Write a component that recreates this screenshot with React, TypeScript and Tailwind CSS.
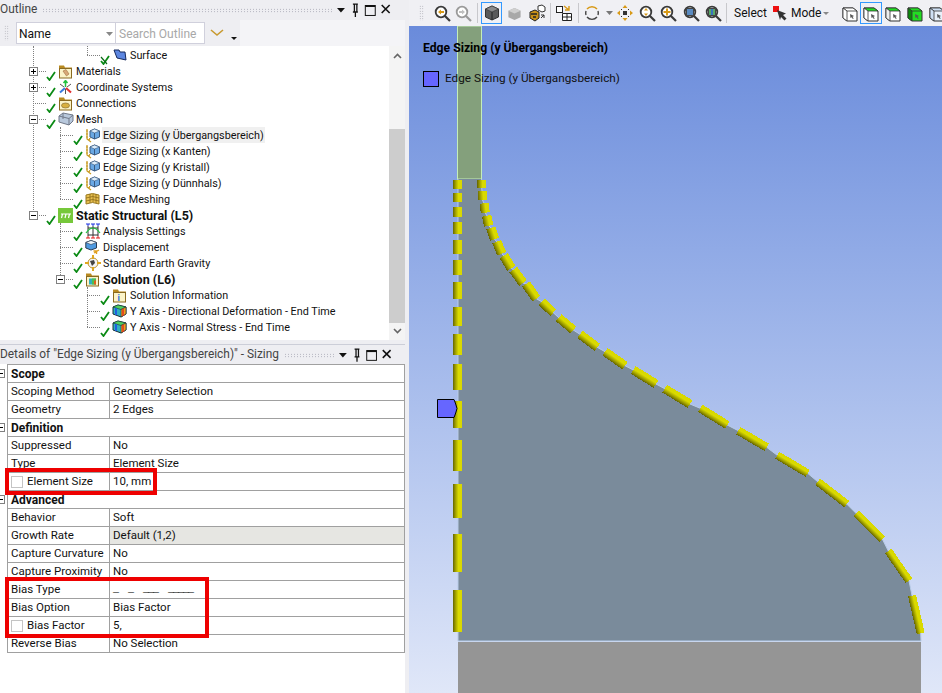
import type { ReactNode } from 'react';

function Check({ crossed }: { crossed?: boolean }) {
  return (
    <svg width="10" height="10" viewBox="0 0 10 10" className="shrink-0 mt-[9px]">
      <path d="M1 6 L3.5 9 L9 1" fill="none" stroke="#0a8a14" strokeWidth="1.8" />
      {crossed && <path d="M1 2 L7 9" stroke="#0a6a14" strokeWidth="1.2" />}
    </svg>
  );
}

function FolderIcon({ inner }: { inner?: ReactNode }) {
  return (
    <svg width="15" height="15" viewBox="0 0 15 15" className="shrink-0">
      <path d="M1 1.5h5l1 2h7v2H1z" fill="#b88a20" />
      <rect x="1.5" y="4.5" width="12" height="9.5" fill="#fbf3c8" stroke="#8a6a20" />
      {inner}
    </svg>
  );
}

function SurfaceIcon() {
  return (
    <svg width="14" height="14" viewBox="0 0 14 14" className="shrink-0">
      <path d="M1 2 L6 2 L7 4 L12 4 L13 12 L4 10 Z" fill="#5c86e0" stroke="#14285c" strokeWidth="1" />
    </svg>
  );
}

function CoordIcon() {
  return (
    <svg width="15" height="15" viewBox="0 0 15 15" className="shrink-0">
      <path d="M7.5 7V1M5.5 3L7.5 .5 9.5 3" stroke="#22c040" fill="none" strokeWidth="1.5" />
      <path d="M7 8L2 12.5" stroke="#3a7ae0" strokeWidth="2" />
      <path d="M8 8L13 12.5" stroke="#e03030" strokeWidth="2" />
      <path d="M2 4L6 7M13 4L9 7M7.5 9V14" stroke="#555" strokeWidth="1" />
    </svg>
  );
}

function MeshIcon() {
  return (
    <svg width="16" height="14" viewBox="0 0 16 14" className="shrink-0">
      <path d="M1 4 L5 1 L15 3 L15 9 L11 13 L1 10 Z" fill="#b8c8dc" stroke="#707888" />
      <path d="M1 4 L11 6.5 L15 3 M11 6.5 V13 M5 1 V7" fill="none" stroke="#707888" />
    </svg>
  );
}

function SizingIcon() {
  return (
    <svg width="15" height="15" viewBox="0 0 15 15" className="shrink-0">
      <path d="M2 1 V11 L6 14 M1 3h2M1 6h2M1 9h2M4 12l1-2" fill="none" stroke="#c89a20" strokeWidth="1.2" />
      <path d="M9.5 1 L14.5 3 V9 L9.5 11 L5 9 V3 Z" fill="#6aa8e4" stroke="#3a5a80" />
      <path d="M5 3 L9.5 5 L14.5 3 L9.5 1 Z" fill="#dcecfa" stroke="#3a5a80" strokeWidth=".6" />
      <path d="M9.5 5V11" stroke="#3a5a80" />
    </svg>
  );
}

function FaceMeshIcon() {
  return (
    <svg width="15" height="13" viewBox="0 0 15 13" className="shrink-0">
      <path d="M1 2 Q7.5 -1 14 2 L14 11 Q7.5 8 1 11 Z" fill="#e8c050" stroke="#9a7a20" />
      <path d="M5 1V10M8 1V9M11 1V10M1 5Q7.5 2 14 5M1 8Q7.5 5 14 8" fill="none" stroke="#8a6a18" strokeWidth=".8" />
    </svg>
  );
}

function StaticIcon() {
  return (
    <svg width="15" height="15" viewBox="0 0 15 15" className="shrink-0">
      <rect width="15" height="15" fill="#76c83a" />
      <path d="M3 6h10M4.5 6 L3.5 10M8 6 L7 10M11.5 6 L10.5 10" stroke="#fff" strokeWidth="1.2" fill="none" />
    </svg>
  );
}

function AnalysisIcon() {
  return (
    <svg width="16" height="16" viewBox="0 0 16 16" className="shrink-0">
      <path d="M3 3v10M8 3v10M13 3v10M3 5h10M3 12h10" stroke="#333" fill="none" />
      <path d="M1 1h4M6 1h4M11 1h4M3 1v2M8 1v2M13 1v2" stroke="#1a30e0" fill="none" />
      <path d="M1 15h4M6 15h4M11 15h4M3 13v2M8 13v2M13 13v2" stroke="#e01a1a" fill="none" />
      <path d="M1 10 Q8 0 15 10" stroke="#22c040" fill="none" strokeWidth="1.2" />
    </svg>
  );
}

function DisplacementIcon() {
  return (
    <svg width="15" height="15" viewBox="0 0 15 15" className="shrink-0">
      <path d="M6 0.5 L11.5 2.5 V8 L6 10 L.8 8 V2.5 Z" fill="#4f9ae0" stroke="#2a3a50" />
      <path d="M.8 2.5 L6 4.5 L11.5 2.5 L6 .5 Z" fill="#f0f6fc" stroke="#2a3a50" strokeWidth=".6" />
      <path d="M9 13 L14 10 M8.5 11h3v3" stroke="#e0a020" fill="none" strokeWidth="1.4" />
    </svg>
  );
}

function GravityIcon() {
  return (
    <svg width="16" height="16" viewBox="0 0 16 16" className="shrink-0">
      <circle cx="8" cy="8" r="5" fill="#f4f4f4" stroke="#b89030" />
      <path d="M5 6 L9 5 L10 8 L7 11 Z" fill="#444" />
      <path d="M8 0V4M8 12V16M0 8H4M12 8H16" stroke="#e0a820" strokeWidth="2" />
    </svg>
  );
}

function ResultIcon() {
  return (
    <svg width="15" height="14" viewBox="0 0 15 14" className="shrink-0">
      <path d="M1 3 L6 1 L14 3 V10 L9 13 L1 10 Z" fill="#30b0c0" stroke="#1a3038" />
      <path d="M1 3 L9 5.5 L14 3 L6 1 Z" fill="#50d060" stroke="#1a3038" strokeWidth=".6" />
      <path d="M9 5.5 V13 L14 10 V3 Z" fill="#f0a020" stroke="#1a3038" strokeWidth=".6" />
      <path d="M11 4.5V12" stroke="#e03020" strokeWidth="1.5" />
      <path d="M4 4V11" stroke="#2060e0" strokeWidth="2" />
    </svg>
  );
}

const materialInner = <path d="M5 7 L8 5.5 L11 10 L8.5 12 Z" fill="#d8a878" stroke="#a07040" strokeWidth=".6" />;
const connInner = <ellipse cx="7.5" cy="9.5" rx="4" ry="2.5" fill="#d8b040" stroke="#8a7030" strokeWidth=".7" />;
const solutionInner = (
  <>
    <rect x="4" y="6.5" width="7" height="6" fill="#30b0c0" />
    <path d="M7 6.5h4v6H7z" fill="#50c050" />
    <path d="M9 8.5h2v4H9z" fill="#e06020" />
  </>
);
const infoInner = <text x="5.5" y="13" fontSize="9" fontWeight="700" fill="#2a70e0">i</text>;

type TreeItem = {
  depth: 1 | 2 | 3;
  label: string;
  icon: ReactNode;
  toggle?: '+' | '-';
  bold?: boolean;
  selected?: boolean;
  crossed?: boolean;
};

const treeItems: TreeItem[] = [
  { depth: 3, label: 'Surface', icon: <SurfaceIcon />, crossed: true },
  { depth: 1, label: 'Materials', icon: <FolderIcon inner={materialInner} />, toggle: '+' },
  { depth: 1, label: 'Coordinate Systems', icon: <CoordIcon />, toggle: '+' },
  { depth: 1, label: 'Connections', icon: <FolderIcon inner={connInner} /> },
  { depth: 1, label: 'Mesh', icon: <MeshIcon />, toggle: '-' },
  { depth: 2, label: 'Edge Sizing (y Übergangsbereich)', icon: <SizingIcon />, selected: true },
  { depth: 2, label: 'Edge Sizing (x Kanten)', icon: <SizingIcon /> },
  { depth: 2, label: 'Edge Sizing (y Kristall)', icon: <SizingIcon /> },
  { depth: 2, label: 'Edge Sizing (y Dünnhals)', icon: <SizingIcon /> },
  { depth: 2, label: 'Face Meshing', icon: <FaceMeshIcon /> },
  { depth: 1, label: 'Static Structural (L5)', icon: <StaticIcon />, toggle: '-', bold: true },
  { depth: 2, label: 'Analysis Settings', icon: <AnalysisIcon /> },
  { depth: 2, label: 'Displacement', icon: <DisplacementIcon /> },
  { depth: 2, label: 'Standard Earth Gravity', icon: <GravityIcon /> },
  { depth: 2, label: 'Solution (L6)', icon: <FolderIcon inner={solutionInner} />, toggle: '-', bold: true },
  { depth: 3, label: 'Solution Information', icon: <FolderIcon inner={infoInner} /> },
  { depth: 3, label: 'Y Axis - Directional Deformation - End Time', icon: <ResultIcon /> },
  { depth: 3, label: 'Y Axis - Normal Stress - End Time', icon: <ResultIcon /> },
];

const depthPadding = { 1: 'pl-[33px]', 2: 'pl-[60px]', 3: 'pl-[87px]' };

function TreeRow({ item }: { item: TreeItem }) {
  return (
    <div className={`flex h-[16px] items-center ${depthPadding[item.depth]}`}>
      <div className="relative w-[13px] shrink-0 border-t border-dotted border-[#808080]">
        {item.toggle && (
          <div className="absolute -left-[4px] -top-[5px] flex h-[9px] w-[9px] items-center justify-center border border-[#808080] bg-white">
            <div className="h-px w-[5px] bg-black" />
            {item.toggle === '+' && <div className="absolute h-[5px] w-px bg-black" />}
          </div>
        )}
      </div>
      <Check crossed={item.crossed} />
      <div className="ml-[2px] flex w-[15px] shrink-0 justify-center">{item.icon}</div>
      <div
        className={`ml-[2px] flex h-[16px] items-center whitespace-nowrap px-[1px] pt-[2px] ${item.bold ? 'text-[12.5px] font-bold' : ''} ${item.selected ? 'bg-[#f0f0f0]' : ''}`}
      >
        {item.label}
      </div>
    </div>
  );
}

function PanelTitle({ title, dotsClass }: { title: string; dotsClass: string }) {
  return (
    <div className="flex h-[20px] shrink-0 items-center bg-[#eeeef2] text-[#444]">
      <span className="whitespace-nowrap text-[11.9px]">{title}</span>
      <div className={`mx-[5px] h-[5px] bg-[radial-gradient(#a8a8b4_0.7px,transparent_0.7px)] bg-[size:3px_2.5px] ${dotsClass}`} />
      <svg width="60" height="16" viewBox="0 0 60 16" className="ml-auto mr-[8px]">
        <path d="M0 6h8L4 10.5z" fill="#111" />
        <path d="M16 2h5M17.5 2v8M20 2v8M16 10h5M18.5 10v5" stroke="#111" fill="none" strokeWidth="1.3" />
        <rect x="28.5" y="3.5" width="10" height="10" stroke="#111" fill="none" />
        <path d="M28.5 4h10" stroke="#111" strokeWidth="2" />
        <path d="M45 3l8 8M53 3l-8 8" stroke="#111" strokeWidth="1.6" />
      </svg>
    </div>
  );
}

type DetailRow = {
  name: string;
  value?: ReactNode;
  header?: boolean;
  box?: boolean;
  shaded?: boolean;
};

const detailRows: DetailRow[] = [
  { name: 'Scope', header: true },
  { name: 'Scoping Method', value: 'Geometry Selection' },
  { name: 'Geometry', value: '2 Edges' },
  { name: 'Definition', header: true },
  { name: 'Suppressed', value: 'No' },
  { name: 'Type', value: 'Element Size' },
  { name: 'Element Size', value: '10, mm', box: true },
  { name: 'Advanced', header: true },
  { name: 'Behavior', value: 'Soft' },
  { name: 'Growth Rate', value: 'Default (1,2)', shaded: true },
  { name: 'Capture Curvature', value: 'No' },
  { name: 'Capture Proximity', value: 'No' },
  {
    name: 'Bias Type',
    value: <span className="whitespace-pre font-['Liberation_Mono',monospace] text-[10px] font-bold tracking-[-1px] text-black">_  _  ___  _____</span>,
  },
  { name: 'Bias Option', value: 'Bias Factor' },
  { name: 'Bias Factor', value: '5,', box: true },
  { name: 'Reverse Bias', value: 'No Selection' },
];

function DetailsRow({ row }: { row: DetailRow }) {
  if (row.header) {
    return (
      <div className="relative flex h-[18px] items-center border-b border-[#a0a0a0] pl-[3px] text-[12px] font-bold">
        <div className="absolute -left-[12px] top-[4px] flex h-[9px] w-[9px] items-center justify-center border border-[#808080] bg-white">
          <div className="h-px w-[5px] bg-black" />
        </div>
        {row.name}
      </div>
    );
  }
  return (
    <div className="flex h-[18px] border-b border-[#a0a0a0]">
      <div className="flex w-[102px] shrink-0 items-center whitespace-nowrap border-r border-[#a0a0a0] pl-[3px]">
        {row.box && <div className="mr-[4px] h-[12px] w-[12px] border border-[#c4c4c4] bg-white" />}
        {row.name}
      </div>
      <div className={`flex flex-1 items-center whitespace-nowrap pl-[3px] ${row.shaded ? 'bg-[#e6e6e2]' : ''}`}>{row.value}</div>
    </div>
  );
}

function Lens({ children, dim }: { children?: ReactNode; dim?: boolean }) {
  return (
    <svg width="17" height="17" viewBox="0 0 17 17">
      <circle cx="7" cy="7" r="5.3" fill="#fff" stroke={dim ? '#9a9a9a' : '#3a3a3a'} strokeWidth="1.8" />
      <path d="M11 11l5 5" stroke={dim ? '#9a9a9a' : '#3a3a3a'} strokeWidth="2.2" />
      {children}
    </svg>
  );
}

function Cube({ fill, top }: { fill: string; top: string }) {
  return (
    <svg width="16" height="16" viewBox="0 0 16 16">
      <path d="M8 1l6.5 3v8L8 15l-6.5-3V4z" fill={fill} stroke="#333" />
      <path d="M1.5 4L8 7l6.5-3L8 1z" fill={top} stroke="#333" strokeWidth=".6" />
      <path d="M8 7v8" stroke="#222" />
    </svg>
  );
}

function ViewCube({ top, front, side }: { top: string; front: string; side: string }) {
  return (
    <svg width="16" height="17" viewBox="0 0 16 17">
      <path d="M1 3h10l4 3v10H5l-4-3z" fill={front} stroke="#333" />
      <path d="M1 3h10l4 3H5z" fill={top} stroke="#333" strokeWidth=".8" />
      <path d="M1 3l4 3v10l-4-3z" fill={side} stroke="#333" strokeWidth=".8" />
      <path d="M8 9l4 2-1.5.7 1.2 1.8-.9.5-1.1-1.8L8.5 13z" fill="#555" />
    </svg>
  );
}

function Sep({ className }: { className: string }) {
  return <div className={`h-[20px] w-px shrink-0 bg-[#c8c8cc] ${className}`} />;
}

function Slot({ className, children }: { className: string; children: ReactNode }) {
  return <div className={`flex shrink-0 items-center justify-center ${className}`}>{children}</div>;
}

function ViewToolbar() {
  return (
    <div className="flex h-[26px] shrink-0 items-center overflow-hidden whitespace-nowrap bg-[#f0f0f4] text-[12px]">
      <div className="ml-[10px] h-[16px] w-[5px] shrink-0 bg-[radial-gradient(#a0a0a8_0.7px,transparent_0.7px)] bg-[size:2.5px_2.5px]" />
      <Slot className="ml-[7px] w-[22px]">
        <Lens><path d="M4 7l3-2.5V6h3v2H7v1.5z" fill="#d89a18" /></Lens>
      </Slot>
      <Slot className="w-[20px]">
        <Lens dim><path d="M10 7L7 4.5V6H4v2h3v1.5z" fill="#c0c0c0" /></Lens>
      </Slot>
      <Sep className="ml-[4px]" />
      <Slot className="ml-[3px] h-[22px] w-[21px] border border-[#3399ff]">
        <Cube fill="#5a5a5a" top="#8a8a8a" />
      </Slot>
      <Slot className="ml-px w-[22px]">
        <svg width="15" height="15" viewBox="0 0 16 16">
          <path d="M8 2l6.5 3v7L8 15l-6.5-3V5z" fill="#a8a8a8" />
          <path d="M1.5 5L8 8l6.5-3L8 2z" fill="#cfcfcf" />
        </svg>
      </Slot>
      <Slot className="ml-px w-[22px]">
        <svg width="18" height="18" viewBox="0 0 18 18">
          <path d="M2 8l5-2 4 2v6l-4 3-5-3z" fill="#c89018" stroke="#222" />
          <path d="M3 10h6M5 13h3" stroke="#222" strokeWidth="1.5" />
          <path d="M10 2l4-1 3 2v4l-3 1-4-2z" fill="#fff" stroke="#333" />
          <path d="M13 14l3-3M16 14v-3h-3" stroke="#333" fill="none" />
        </svg>
      </Slot>
      <Sep className="ml-[2px]" />
      <Slot className="ml-[2px] w-[22px]">
        <svg width="16" height="16" viewBox="0 0 16 16">
          <rect x=".5" y="1.5" width="6" height="6" fill="#fff" stroke="#222" />
          <path d="M8 1l5 4M13 1v4H9" stroke="#d89a18" fill="none" strokeWidth="1.4" />
          <path d="M6.5 8.5h9v7h-9zM11 8.5v7M6.5 12h9" fill="#fff" stroke="#222" />
        </svg>
      </Slot>
      <Sep className="ml-[3px]" />
      <Slot className="ml-[2px] w-[22px]">
        <svg width="16" height="16" viewBox="0 0 16 16">
          <path d="M3 4a6.5 6.5 0 0 1 10 0" fill="none" stroke="#d89a18" strokeWidth="1.5" />
          <path d="M13 12a6.5 6.5 0 0 1-10 0M2 6a6.5 6.5 0 0 0 0 4M14 6a6.5 6.5 0 0 1 0 4" fill="none" stroke="#444" strokeWidth="1.4" />
        </svg>
      </Slot>
      <Slot className="w-[12px]">
        <svg width="7" height="4" viewBox="0 0 7 4"><path d="M0 0h7L3.5 4z" fill="#777" /></svg>
      </Slot>
      <Slot className="w-[20px]">
        <svg width="18" height="18" viewBox="0 0 18 18">
          <path d="M9 1l2.5 3h-5zM9 17l-2.5-3h5zM1 9l3-2.5v5zM17 9l-3 2.5v-5z" fill="#d89a18" />
          <rect x="7" y="7" width="4" height="4" fill="#333" />
          <path d="M6 6l-1-1M12 6l1-1M6 12l-1 1M12 12l1 1" stroke="#333" />
        </svg>
      </Slot>
      <Slot className="ml-px w-[22px]">
        <Lens><path d="M7 3l2 2.5H5zM7 11L5 8.500h4z" fill="#d89a18" /></Lens>
      </Slot>
      <Slot className="w-[20px]">
        <Lens><path d="M6 3.500h2v2.500h2.500v2H8v2.500H6V8H3.500V6H6z" fill="#d89a18" /></Lens>
      </Slot>
      <Slot className="ml-[2px] w-[22px]">
        <Lens><rect x="3.500" y="3.500" width="7" height="7" fill="#5a8ac0" stroke="#444" /></Lens>
      </Slot>
      <Slot className="w-[22px]">
        <Lens><path d="M3.500 3.500h7v7h-7z" fill="#58a868" stroke="#444" /><path d="M7 4v6" stroke="#3a70c0" strokeWidth="2" /></Lens>
      </Slot>
      <Sep className="ml-[2px]" />
      <span className="ml-[7px] w-[31px] shrink-0">Select</span>
      <Slot className="ml-[8px] w-[14px]">
        <svg width="14" height="15" viewBox="0 0 14 15">
          <rect width="6" height="6" fill="#ee1111" />
          <path d="M4 4l9 3.500-3 1.500 3.500 3.500-2 2L8 11l-1 3z" fill="#333" />
        </svg>
      </Slot>
      <span className="ml-[4px] w-[31px] shrink-0">Mode</span>
      <Slot className="ml-px w-[6px]">
        <svg width="6" height="3" viewBox="0 0 6 3"><path d="M0 0h6L3 3z" fill="#888" /></svg>
      </Slot>
      <Slot className="ml-[13px] w-[16px]"><ViewCube top="#fff" front="#fff" side="#fff" /></Slot>
      <Slot className="ml-[2px] h-[22px] w-[22px] border border-[#3399ff]"><ViewCube top="#22dd22" front="#fff" side="#fff" /></Slot>
      <Slot className="ml-[3px] w-[16px]"><ViewCube top="#22dd22" front="#fff" side="#eee" /></Slot>
      <Slot className="ml-[6px] w-[16px]"><ViewCube top="#22dd22" front="#22dd22" side="#0a8a0a" /></Slot>
      <Slot className="ml-[6px] w-[16px]"><ViewCube top="#cfe0f4" front="#e8f0fa" side="#cfe0f4" /></Slot>
    </div>
  );
}

// dashes along the right hand curve: x1, y1, x2, y2, thickness
const curveDashes = [
  [481.7, 180, 481.7, 188, 9], [482, 191.3, 482.5, 200, 9], [484, 203.3, 485.3, 212.7, 9],
  [486.7, 215.7, 488.7, 225.7, 9.5], [491, 228, 494.7, 239.3, 9.5], [496.7, 241.7, 501.7, 253.7, 9.5],
  [503.7, 255.7, 511.3, 268.3, 9.5], [513.3, 269.7, 523, 283, 9.5], [526, 284, 536.3, 298.7, 9.5],
  [541.7, 301.7, 553.3, 312.7, 9], [558.7, 317.7, 573.3, 330, 9], [580, 334.3, 597.3, 347.3, 9],
  [605, 351.7, 625, 365.7, 9], [633.3, 370, 656, 384, 9], [664.7, 388.7, 690, 404, 9],
  [700.3, 408.3, 727.3, 425, 8.5], [738.3, 430.7, 766.7, 447.3, 8.5], [777.3, 455.3, 807.7, 473.3, 8],
  [817.7, 481.7, 846.7, 504, 8], [856, 513.3, 882.3, 539, 8], [888.3, 551, 909, 580.7, 8],
  [912, 595.7, 920.7, 633.3, 8],
];

// dashes on the straight left edge, y from / y to
const leftDashes = [
  [180, 189], [193, 202], [207, 217], [222, 234], [240, 254], [260, 275], [282, 299],
  [307, 326], [334, 355], [364, 390], [401, 428], [440, 471], [484, 518], [534, 572], [590, 632],
];

const allDashes = [
  ...leftDashes.map(([a, b]) => [457.5, a, 457.5, b, 9]),
  ...curveDashes,
];

const curvePoints = curveDashes.map((d) => `${d[0]},${d[1]} ${d[2]},${d[3]}`).join(' ');

function Geometry() {
  return (
    <svg className="absolute inset-0 h-full w-full" viewBox="409 26 533 667">
      <defs>
        {allDashes.map(([x1, y1, x2, y2, w], i) => {
          const len = Math.hypot(x2 - x1, y2 - y1);
          const nx = (-(y2 - y1) / len) * (w / 2);
          const ny = ((x2 - x1) / len) * (w / 2);
          const cx = (x1 + x2) / 2;
          const cy = (y1 + y2) / 2;
          return (
            <linearGradient key={i} id={`dash${i}`} gradientUnits="userSpaceOnUse" x1={cx + nx} y1={cy + ny} x2={cx - nx} y2={cy - ny}>
              <stop offset="0" stopColor="#666600" />
              <stop offset="0.3" stopColor="#a4a400" />
              <stop offset="0.6" stopColor="#dada00" />
              <stop offset="1" stopColor="#d8d800" />
            </linearGradient>
          );
        })}
      </defs>
      <rect x="457.5" y="26" width="24" height="153" fill="#84a07c" stroke="#c4eeb8" />
      <polygon points={`458,179 481,179 ${curvePoints} 921,641 458,641`} fill="#7a8b9b" />
      <polyline points={`458,179 458,641 921,641`} fill="none" stroke="#b8cce8" />
      <polyline points={`481.5,179 ${curvePoints} 921,641`} fill="none" stroke="#b8cce8" />
      <rect x="458" y="642" width="463" height="51" fill="#959595" />
      {allDashes.map(([x1, y1, x2, y2, w], i) => (
        <line key={i} x1={x1} y1={y1} x2={x2} y2={y2} stroke={`url(#dash${i})`} strokeWidth={w} shapeRendering="crispEdges" />
      ))}
      <polygon
        points="437.500,399.500 454,399.500 455,402 456,405 457,408.500 456,412 455,415 454,417.500 437.500,417.500"
        fill="#6666ff"
        stroke="#000"
      />
    </svg>
  );
}

export default function App() {
  return (
    <div className="flex h-[693px] w-[942px] overflow-hidden bg-[#eeeef2] font-['Roboto',sans-serif] text-[11.5px] text-[#111]">
      <div className="flex w-[405px] shrink-0 flex-col">
        <PanelTitle title="Outline" dotsClass="w-[292px]" />

        <div className="flex h-[26px] shrink-0 bg-[#f4f4f7]">
          <div className="flex w-[240px] items-center bg-[#eeeef2]">
            <div className="ml-[4px] h-[16px] w-[5px] bg-[radial-gradient(#a8a8b0_0.7px,transparent_0.7px)] bg-[size:2.5px_2.5px]" />
            <div className="ml-[7px] flex h-[22px] w-[100px] items-center justify-between border border-[#d0d0dc] bg-white pl-[2px] pr-[2px] pt-px text-[12px]">
              Name
              <svg width="7" height="4" viewBox="0 0 7 4"><path d="M0 0h7L3.500 4z" fill="#888" /></svg>
            </div>
            <div className="flex h-[22px] w-[89px] items-center border border-l-0 border-[#d0d0dc] bg-white pl-[3px] pt-px text-[12px] text-[#a8a8a8]">
              Search Outline
            </div>
            <svg width="14" height="8" viewBox="0 0 14 8" className="ml-[5px]"><path d="M1 1l6 5 6-5" fill="none" stroke="#c89a30" strokeWidth="1.6" /></svg>
            <svg width="6" height="3" viewBox="0 0 6 3" className="ml-[7px] mt-[10px]"><path d="M0 0h6L3 3z" fill="#111" /></svg>
          </div>
        </div>

        <div className="relative flex h-[294px] shrink-0 bg-white">
          <div className="absolute left-[33px] top-0 h-[170px] border-l border-dotted border-[#808080]" />
          <div className="absolute left-[87px] top-0 h-[9px] border-l border-dotted border-[#808080]" />
          <div className="absolute left-[60px] top-[81px] h-[72px] border-l border-dotted border-[#808080]" />
          <div className="absolute left-[60px] top-[177px] h-[56px] border-l border-dotted border-[#808080]" />
          <div className="absolute left-[87px] top-[241px] h-[40px] border-l border-dotted border-[#808080]" />
          <div className="relative flex-1 overflow-hidden pt-px text-[10.8px]">
            {treeItems.map((item) => (
              <TreeRow key={item.label} item={item} />
            ))}
          </div>
          <div className="flex w-[16px] shrink-0 flex-col bg-[#f4f4f4]">
            <div className="flex h-[83px] justify-center pt-[7px]">
              <svg width="9" height="6" viewBox="0 0 9 6"><path d="M1 5l3.500-3.500L8 5" fill="none" stroke="#666" strokeWidth="1.6" /></svg>
            </div>
            <div className="h-[194px] bg-[#cdcdcd]" />
            <div className="flex justify-center pt-[5px]">
              <svg width="9" height="6" viewBox="0 0 9 6"><path d="M1 1l3.500 3.500L8 1" fill="none" stroke="#666" strokeWidth="1.6" /></svg>
            </div>
          </div>
        </div>

        <div className="h-[4px] shrink-0 bg-[#eeeef2]" />
        <div className="flex h-[20px] shrink-0 flex-col border-t border-[#ccced8]">
          <PanelTitle title={'Details of "Edge Sizing (y Übergangsbereich)" - Sizing'} dotsClass="w-[51px]" />
        </div>

        <div className="relative flex-1 bg-white pl-[7px]">
          <div className="border-x border-t border-[#a0a0a0]">
            {detailRows.map((row) => (
              <DetailsRow key={row.name} row={row} />
            ))}
          </div>
          <div className="absolute left-[5px] top-[104px] h-[27px] w-[152px] border-[4px] border-[#ee0000]" />
          <div className="absolute left-[5px] top-[213px] h-[61px] w-[204px] border-[4px] border-[#ee0000]" />
        </div>
      </div>

      <div className="ml-[4px] flex min-w-0 flex-1 flex-col">
        <ViewToolbar />
        <div className="relative flex-1 overflow-hidden bg-linear-to-b from-[#6a8bdb] to-[#e0e7f8]">
          <Geometry />
          <div className="relative pl-[14px] pt-[14px] text-[#111]">
            <div className="h-[16px] text-[12.2px] font-bold leading-[16px] text-black">Edge Sizing (y Übergangsbereich)</div>
            <div className="mt-[14px] flex items-center">
              <div className="h-[16px] w-[16px] border border-black bg-[#6666ff]" />
              <span className="ml-[6px] text-[11.75px]">Edge Sizing (y Übergangsbereich)</span>
            </div>
          </div>
        </div>
      </div>
    </div>
  );
}
